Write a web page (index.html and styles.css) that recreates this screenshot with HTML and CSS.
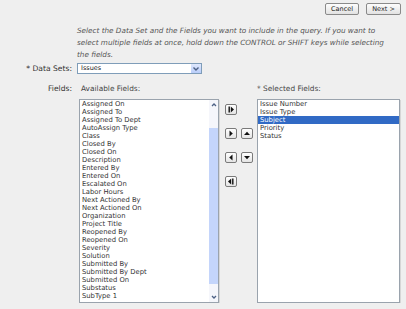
FILE: index.html
```html
<!DOCTYPE html>
<html lang="en">
<head>
    <meta charset="UTF-8">
    <title>Query Fields</title>
    <link rel="stylesheet" href="styles.css">
</head>
<body>
    <div class="toolbar">
        <button class="btn btn-cancel">Cancel</button>
        <button class="btn btn-next">Next &gt;</button>
    </div>

    <p class="intro">Select the Data Set and the Fields you want to include in the query. If you want to select multiple fields at once, hold down the CONTROL or SHIFT keys while selecting the fields.</p>

    <div class="form-row">
        <div class="label">* Data Sets:</div>
        <div class="select">
            <span class="select-value">Issues</span>
            <span class="select-arrow">
                <svg viewBox="0 0 8 8" width="8" height="8"><path d="M1.5 2.5 L4 5 L6.5 2.5" fill="none" stroke="#4d6185" stroke-width="1.4"/></svg>
            </span>
        </div>
    </div>

    <div class="form-row fields-row">
        <div class="label">Fields:</div>
        <div class="fields">
            <div class="column">
                <div class="col-title">Available Fields:</div>
                <div class="listbox listbox-left">
                    <ul class="items">
                        <li>Assigned On</li>
                        <li>Assigned To</li>
                        <li>Assigned To Dept</li>
                        <li>AutoAssign Type</li>
                        <li>Class</li>
                        <li>Closed By</li>
                        <li>Closed On</li>
                        <li>Description</li>
                        <li>Entered By</li>
                        <li>Entered On</li>
                        <li>Escalated On</li>
                        <li>Labor Hours</li>
                        <li>Next Actioned By</li>
                        <li>Next Actioned On</li>
                        <li>Organization</li>
                        <li>Project Title</li>
                        <li>Reopened By</li>
                        <li>Reopened On</li>
                        <li>Severity</li>
                        <li>Solution</li>
                        <li>Submitted By</li>
                        <li>Submitted By Dept</li>
                        <li>Submitted On</li>
                        <li>Substatus</li>
                        <li>SubType 1</li>
                    </ul>
                    <div class="scrollbar">
                        <div class="sb-btn">
                            <svg viewBox="0 0 8 8" width="8" height="8"><path d="M2 5 L4 3 L6 5" fill="none" stroke="#4d6185" stroke-width="1.3"/></svg>
                        </div>
                        <div class="sb-track"><div class="sb-thumb"></div></div>
                        <div class="sb-btn">
                            <svg viewBox="0 0 8 8" width="8" height="8"><path d="M2 3 L4 5 L6 3" fill="none" stroke="#4d6185" stroke-width="1.3"/></svg>
                        </div>
                    </div>
                </div>
            </div>

            <div class="movers">
                <button class="mv mv-all-right">
                    <svg viewBox="0 0 10 9" width="10" height="9"><rect x="2.5" y="1.5" width="1.4" height="6" fill="#111"/><path d="M4.8 1.5 L8 4.5 L4.8 7.5 Z" fill="#111"/></svg>
                </button>
                <span></span>
                <button class="mv">
                    <svg viewBox="0 0 10 9" width="10" height="9"><path d="M3.5 1.5 L6.8 4.5 L3.5 7.5 Z" fill="#111"/></svg>
                </button>
                <button class="mv">
                    <svg viewBox="0 0 10 9" width="10" height="9"><path d="M2 6 L5 2.8 L8 6 Z" fill="#111"/></svg>
                </button>
                <button class="mv">
                    <svg viewBox="0 0 10 9" width="10" height="9"><path d="M6.5 1.5 L3.2 4.5 L6.5 7.5 Z" fill="#111"/></svg>
                </button>
                <button class="mv">
                    <svg viewBox="0 0 10 9" width="10" height="9"><path d="M2 3 L5 6.2 L8 3 Z" fill="#111"/></svg>
                </button>
                <button class="mv mv-all-left">
                    <svg viewBox="0 0 10 9" width="10" height="9"><path d="M5.2 1.5 L2 4.5 L5.2 7.5 Z" fill="#111"/><rect x="6.1" y="1.5" width="1.4" height="6" fill="#111"/></svg>
                </button>
            </div>

            <div class="column column-right">
                <div class="col-title">* Selected Fields:</div>
                <div class="listbox listbox-right">
                    <ul class="items">
                        <li>Issue Number</li>
                        <li>Issue Type</li>
                        <li class="selected">Subject</li>
                        <li>Priority</li>
                        <li>Status</li>
                    </ul>
                </div>
            </div>
        </div>
    </div>
</body>
</html>
```

FILE: styles.css
```css
/* --- Page --- */
body {
    margin: 0;
    background-color: #efefef;
    font-family: 'DejaVu Sans', Verdana, sans-serif;
    color: #333;
}

/* --- Top buttons --- */
.toolbar {
    display: flex;
    justify-content: flex-end;
    gap: 7px;
    padding: 3px 5px 0 0;
}
.btn {
    height: 12px;
    padding: 0;
    font-family: inherit;
    font-size: 6.5px;
    color: #222;
    border: 1px solid #8a8a8a;
    border-radius: 2px;
    background: linear-gradient(#fdfdfd, #e2e2e2);
}
.btn-cancel { width: 34px; }
.btn-next { width: 35px; }

/* --- Intro text --- */
.intro {
    margin: 10px 0 0 77px;
    width: 312px;
    font-size: 7.25px;
    line-height: 12px;
    font-style: italic;
    color: #555;
}

/* --- Form rows --- */
.form-row {
    display: grid;
    grid-template-columns: 72px 1fr;
    column-gap: 5px;
    margin-top: 2px;
}
.label {
    text-align: right;
    font-size: 7.6px;
    line-height: 11px;
    color: #333;
}

.select {
    width: 123px;
    height: 9px;
    display: flex;
    justify-content: space-between;
    border: 1px solid #7f9db9;
    background: #fff;
}
.select-value {
    font-size: 6.5px;
    line-height: 9px;
    padding-left: 3px;
    color: #222;
}
.select-arrow {
    width: 10px;
    height: 9px;
    display: flex;
    align-items: center;
    justify-content: center;
    background: linear-gradient(#dfe8fd, #b9cdf9);
}

/* --- Fields --- */
.fields-row { margin-top: 9px; }
.fields {
    display: flex;
    padding-left: 2px;
}
.column { display: flex; flex-direction: column; }
.col-title {
    font-size: 7.4px;
    line-height: 12px;
    height: 16px;
    padding-left: 2px;
    color: #444;
}
.column-right .col-title { padding-left: 0; }

.listbox {
    height: 202px;
    border: 1px solid #9aa3ad;
    background: #fff;
    box-shadow: 1px 1px 0 #d6d6d6;
    display: flex;
}
.listbox-left { width: 138px; }
.listbox-right { width: 141px; }

.items {
    list-style: none;
    margin: 0;
    padding: 0;
    flex: 1;
}
.items li {
    font-size: 6.8px;
    line-height: 8px;
    height: 8px;
    padding-left: 2px;
    color: #333;
    white-space: nowrap;
}
.items li.selected {
    background: #316ac5;
    color: #fff;
}

.scrollbar {
    width: 9px;
    display: flex;
    flex-direction: column;
    background: #f5f6fb;
}
.sb-btn {
    height: 10px;
    display: flex;
    align-items: center;
    justify-content: center;
}
.sb-track {
    flex: 1;
    padding: 18px 0 8px;
    display: flex;
}
.sb-thumb {
    flex: 1;
    background: #c4d5fb;
}

/* --- Move buttons --- */
.movers {
    display: grid;
    grid-template-columns: 12px 12px;
    grid-template-rows: 11px 11px 11px 11px;
    column-gap: 4px;
    row-gap: 13px;
    align-content: start;
    padding-top: 21px;
    margin: 0 4px 0 6px;
}
.mv {
    width: 12px;
    height: 11px;
    padding: 0;
    display: flex;
    align-items: center;
    justify-content: center;
    border: 1px solid #7a7a7a;
    border-radius: 2px;
    background: linear-gradient(#ffffff, #e4e4e4);
}
.mv-all-left { grid-column: 1; }
```
